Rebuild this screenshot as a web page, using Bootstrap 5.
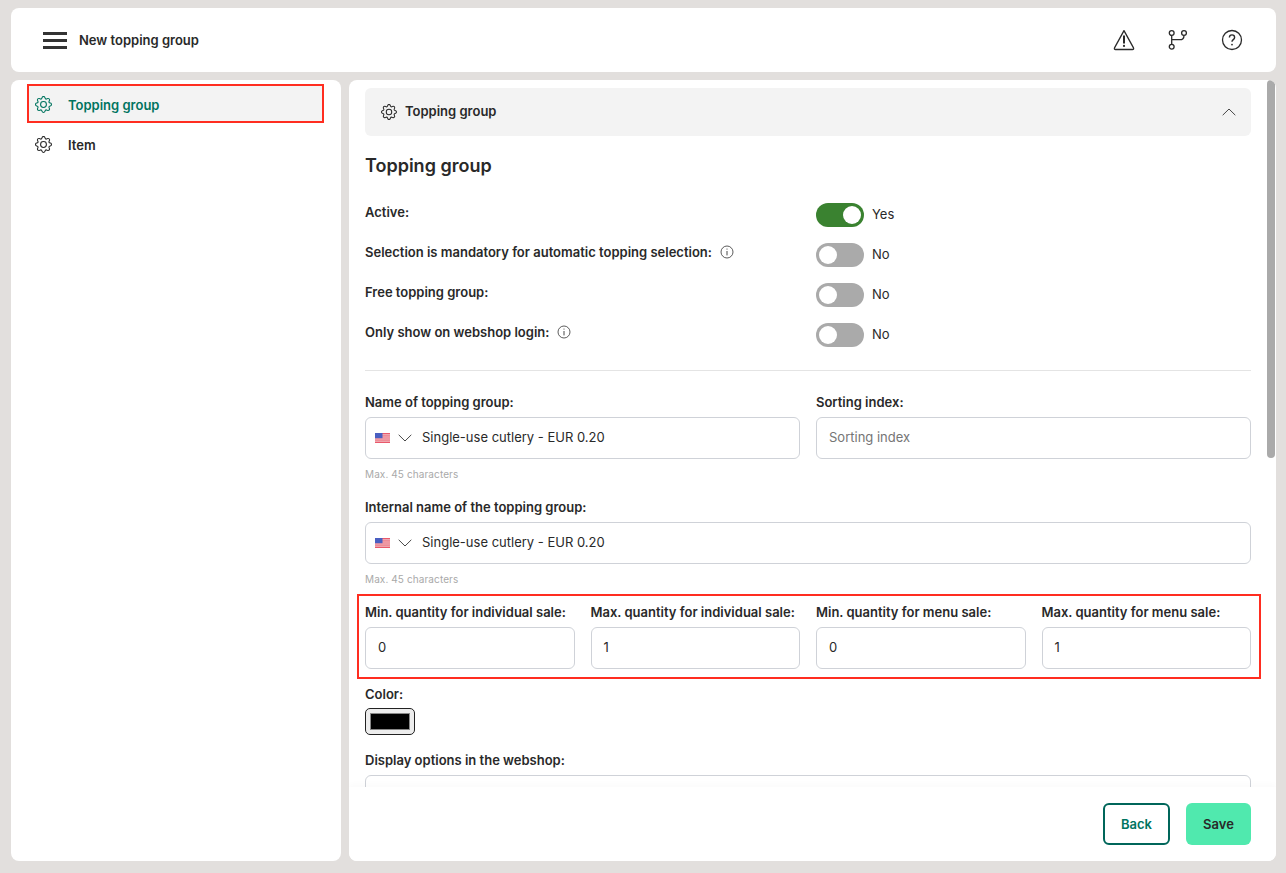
<!DOCTYPE html>
<html lang="en">
<head>
<meta charset="utf-8">
<title>New topping group</title>
<link href="https://cdn.jsdelivr.net/npm/bootstrap@5.3.0/dist/css/bootstrap.min.css" rel="stylesheet">
<style>
html,body{height:100%;}
body{background:#e2dfdd;font-family:Inter,"Liberation Sans",sans-serif;font-size:13px;color:#292929;overflow:hidden;}
.shell{height:873px;padding:8px 10px 12px 11px;gap:8px;}
.topbar{height:64px;background:#fff;border-radius:8px;padding:0 32px;flex:none;}
.burger{width:24px;height:17px;margin-right:12px;display:flex;flex-direction:column;justify-content:space-between;}
.burger span{display:block;height:3px;background:#333;}
.page-title{font-weight:600;font-size:13px;padding-top:2px;}
.top-icons{gap:30px;}
.panes{gap:8px;min-height:0;}
.side{width:330px;background:#fff;border-radius:8px;flex:none;padding:4px 17px 4px 16px;}
.side-item{height:39px;padding:5px 0 0 8px;font-weight:600;gap:16px;}
.side-item svg{flex:none;margin-top:-3px;}
.side-item.on{color:#00745f;background:#f3f3f3;outline:2px solid #ff2d20;outline-offset:-2px;margin-bottom:1px;}
.work{background:#fff;border-radius:8px;min-width:0;position:relative;overflow:hidden;}
.scroll-thumb{position:absolute;right:1px;top:0;width:8px;height:378px;background:#aaa;border-radius:4px;}
.scroller{flex:1 1 0;min-height:0;overflow:hidden;padding:8px 25px 0 16px;}
.acc-head{height:48px;background:#f3f3f3;border-radius:6px;padding:0 15px 0 16px;font-weight:600;gap:8px;}
.sect-title{font-size:18px;font-weight:600;line-height:24px;margin:18px 0 25px;}
.switch-row{height:40px;align-items:flex-start;}
.switch-label{width:451px;font-weight:600;line-height:16px;padding-top:1px;gap:8px;flex:none;}
.tgl{width:48px;height:24px;border-radius:12px;background:#aaa;position:relative;flex:none;margin:0 8px 0 0;}
.tgl::after{content:"";position:absolute;left:3px;top:3px;width:18px;height:18px;border-radius:50%;background:#fff;}
.tgl.yes{background:#3a8230;}
.tgl.yes::after{left:27px;}
.tgl-text{line-height:22px;}
.rule{height:1px;background:#e4e4e4;margin:7px 0 23px;}
.fld-row{gap:16px;}
.fld{flex:1 1 0;min-width:0;}
.fld-label{font-weight:600;line-height:16px;margin-bottom:7px;display:block;}
.fld-label.tight{margin-bottom:6px;}
.box{height:42px;border:1px solid #cfd2d8;border-radius:6px;padding:0 12px;background:#fff;width:100%;color:#292929;}
.box.ph{color:#757575;}
.box.flagged{padding-left:9px;gap:8px;}
.flag-chev{margin-right:2px;}
.hint{font-size:10px;color:#a9a9a9;line-height:12px;margin-top:9px;margin-bottom:19px;letter-spacing:.1px;}
.qty-wrap{position:relative;margin-bottom:17px;}
.qty-wrap::after{content:"";position:absolute;left:-8px;right:-10px;top:-10px;bottom:-10px;border:2px solid #ff2d20;pointer-events:none;}
.swatch{width:50px;height:27px;border:1px solid #222;border-radius:5px;background:#ededed;padding:4px;margin-bottom:17px;}
.swatch i{display:block;height:100%;background:#000;border:1.5px solid #888;}
.foot{height:74px;flex:none;background:#fff;padding:16px 25px 16px 0;gap:16px;justify-content:flex-end;box-shadow:0 -3px 6px rgba(0,0,0,.02);}
.btn-back,.btn-save{height:42px;font-size:13px;font-weight:600;border-radius:6px;display:flex;align-items:center;justify-content:center;padding:2px 0 0;}
.btn-back{width:67px;background:#fff;color:#00745f;border:2px solid #00665a;}
.btn-save{width:65px;background:#50e9ae;color:#292929;border:0;}
.flip-y{transform:rotate(180deg);}
</style>
</head>
<body>
<svg width="0" height="0" class="position-absolute">
<symbol id="gear" viewBox="0 0 16 16"><path fill="currentColor" d="M8 4.754a3.246 3.246 0 1 0 0 6.492 3.246 3.246 0 0 0 0-6.492zM5.754 8a2.246 2.246 0 1 1 4.492 0 2.246 2.246 0 0 1-4.492 0z"/><path fill="currentColor" d="M9.796 1.343c-.527-1.79-3.065-1.79-3.592 0l-.094.319a.873.873 0 0 1-1.255.52l-.292-.16c-1.64-.892-3.433.902-2.54 2.541l.159.292a.873.873 0 0 1-.52 1.255l-.319.094c-1.79.527-1.79 3.065 0 3.592l.319.094a.873.873 0 0 1 .52 1.255l-.16.292c-.892 1.64.901 3.434 2.541 2.54l.292-.159a.873.873 0 0 1 1.255.52l.094.319c.527 1.79 3.065 1.79 3.592 0l.094-.319a.873.873 0 0 1 1.255-.52l.292.16c1.64.893 3.434-.902 2.54-2.541l-.159-.292a.873.873 0 0 1 .52-1.255l.319-.094c1.79-.527 1.79-3.065 0-3.592l-.319-.094a.873.873 0 0 1-.52-1.255l.16-.292c.893-1.64-.902-3.433-2.541-2.54l-.292.159a.873.873 0 0 1-1.255-.52l-.094-.319zm-2.633.283c.246-.835 1.428-.835 1.674 0l.094.319a1.873 1.873 0 0 0 2.693 1.115l.291-.16c.764-.415 1.6.42 1.184 1.185l-.159.292a1.873 1.873 0 0 0 1.116 2.692l.318.094c.835.246.835 1.428 0 1.674l-.319.094a1.873 1.873 0 0 0-1.115 2.693l.16.291c.415.764-.42 1.6-1.185 1.184l-.291-.159a1.873 1.873 0 0 0-2.693 1.116l-.094.318c-.246.835-1.428.835-1.674 0l-.094-.319a1.873 1.873 0 0 0-2.692-1.115l-.292.16c-.764.415-1.6-.42-1.184-1.185l.159-.291A1.873 1.873 0 0 0 1.945 8.93l-.319-.094c-.835-.246-.835-1.428 0-1.674l.319-.094A1.873 1.873 0 0 0 3.06 4.377l-.16-.292c-.415-.764.42-1.6 1.185-1.184l.292.159a1.873 1.873 0 0 0 2.692-1.115l.094-.319z"/></symbol>
<symbol id="info" viewBox="0 0 14 14"><circle cx="7" cy="7" r="6" fill="none" stroke="#333" stroke-width=".8"/><path d="M7 6v4.400" stroke="#333" stroke-width=".9" fill="none"/><circle cx="7" cy="4" r=".55" fill="#333"/></symbol>
<symbol id="flag" viewBox="0 0 15 10"><rect width="15" height="10" fill="#e9596b"/><path d="M0 1.900h15M0 4h15M0 6h15M0 8.100h15" stroke="#f4d9dc" stroke-width="1"/><rect width="7.500" height="5.200" fill="#4a5fc1"/></symbol>
<symbol id="chev" viewBox="0 0 14 8"><path d="M.7.800 7 7 13.300.800" fill="none" stroke="#333" stroke-width=".9"/></symbol>
</svg>
<div class="shell d-flex flex-column">
  <header class="topbar d-flex align-items-center">
    <div class="burger" aria-hidden="true"><span></span><span></span><span></span></div>
    <div class="page-title flex-grow-1">New topping group</div>
    <div class="top-icons d-flex align-items-center">
      <svg width="24" height="24" viewBox="0 0 24 24" fill="none" stroke="#2b2b2b" stroke-width="1.300" stroke-linejoin="round"><path d="M12 2.600 2.500 19.900c-.4.900.1 1.600 1 1.600h17c.9 0 1.400-.7 1-1.600z"/><path d="M12 7.500v8" stroke-width="2"/><circle cx="12" cy="17.900" r="1.100" fill="#2b2b2b" stroke="none"/></svg>
      <svg width="24" height="24" viewBox="0 0 24 24" fill="none" stroke="#2b2b2b" stroke-width="1.300"><circle cx="5.700" cy="5" r="2.400"/><circle cx="5.700" cy="18.700" r="2.400"/><circle cx="18" cy="5" r="2.400"/><path d="M5.700 7.400v8.900M5.700 11.700h8q4.300 0 4.300-4.300"/></svg>
      <svg width="24" height="24" viewBox="0 0 24 24" fill="none" stroke="#2b2b2b" stroke-width="1.300"><circle cx="12" cy="12" r="9.500"/><path d="M9.400 9.600c0-1.600 1.100-2.700 2.600-2.700s2.600 1 2.600 2.500c0 2.200-2.600 2.200-2.600 4.400" stroke-width="1.400"/><circle cx="12" cy="16.600" r=".9" fill="#2b2b2b" stroke="none"/></svg>
    </div>
  </header>
  <div class="panes d-flex flex-grow-1">
    <aside class="side">
      <div class="side-item on d-flex align-items-center"><svg width="17" height="17"><use href="#gear"/></svg><span>Topping group</span></div>
      <div class="side-item d-flex align-items-center"><svg width="17" height="17"><use href="#gear"/></svg><span>Item</span></div>
    </aside>
    <main class="work flex-grow-1 d-flex flex-column">
      <div class="scroll-thumb"></div>
      <div class="scroller">
        <div class="acc-head d-flex align-items-center">
          <svg width="16" height="16"><use href="#gear"/></svg>
          <span class="flex-grow-1">Topping group</span>
          <svg width="14" height="8" class="flip-y"><use href="#chev"/></svg>
        </div>
        <h2 class="sect-title">Topping group</h2>
        <div class="switch-row d-flex">
          <div class="switch-label d-flex align-items-center">Active:</div>
          <div class="tgl yes"></div><div class="tgl-text">Yes</div>
        </div>
        <div class="switch-row d-flex">
          <div class="switch-label d-flex align-items-center">Selection is mandatory for automatic topping selection: <svg width="14" height="14"><use href="#info"/></svg></div>
          <div class="tgl"></div><div class="tgl-text">No</div>
        </div>
        <div class="switch-row d-flex">
          <div class="switch-label d-flex align-items-center">Free topping group:</div>
          <div class="tgl"></div><div class="tgl-text">No</div>
        </div>
        <div class="switch-row d-flex">
          <div class="switch-label d-flex align-items-center">Only show on webshop login: <svg width="14" height="14"><use href="#info"/></svg></div>
          <div class="tgl"></div><div class="tgl-text">No</div>
        </div>
        <div class="rule"></div>
        <div class="fld-row d-flex">
          <div class="fld">
            <label class="fld-label">Name of topping group:</label>
            <div class="box flagged d-flex align-items-center"><svg width="15" height="10"><use href="#flag"/></svg><svg width="14" height="8" class="flag-chev"><use href="#chev"/></svg><span>Single-use cutlery - EUR 0.20</span></div>
            <div class="hint">Max. 45 characters</div>
          </div>
          <div class="fld">
            <label class="fld-label">Sorting index:</label>
            <div class="box ph d-flex align-items-center">Sorting index</div>
          </div>
        </div>
        <label class="fld-label">Internal name of the topping group:</label>
        <div class="box flagged d-flex align-items-center"><svg width="15" height="10"><use href="#flag"/></svg><svg width="14" height="8" class="flag-chev"><use href="#chev"/></svg><span>Single-use cutlery - EUR 0.20</span></div>
        <div class="hint">Max. 45 characters</div>
        <div class="qty-wrap fld-row d-flex">
          <div class="fld"><label class="fld-label">Min. quantity for individual sale:</label><div class="box d-flex align-items-center">0</div></div>
          <div class="fld"><label class="fld-label">Max. quantity for individual sale:</label><div class="box d-flex align-items-center">1</div></div>
          <div class="fld"><label class="fld-label">Min. quantity for menu sale:</label><div class="box d-flex align-items-center">0</div></div>
          <div class="fld"><label class="fld-label">Max. quantity for menu sale:</label><div class="box d-flex align-items-center">1</div></div>
        </div>
        <label class="fld-label tight">Color:</label>
        <div class="swatch"><i></i></div>
        <label class="fld-label">Display options in the webshop:</label>
        <div class="box"></div>
      </div>
      <div class="foot d-flex">
        <button class="btn btn-back" type="button">Back</button>
        <button class="btn btn-save" type="button">Save</button>
      </div>
    </main>
  </div>
</div>
<script src="https://cdn.jsdelivr.net/npm/bootstrap@5.3.0/dist/js/bootstrap.bundle.min.js"></script>
</body>
</html>
